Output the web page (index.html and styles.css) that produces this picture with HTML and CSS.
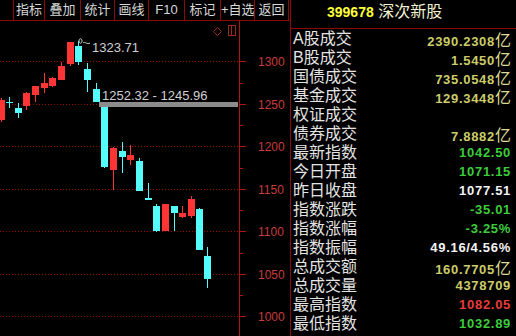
FILE: index.html
```html
<!DOCTYPE html>
<html lang="zh-CN">
<head>
    <meta charset="UTF-8">
    <meta name="viewport" content="width=device-width, initial-scale=1.0">
    <title>399678 深次新股</title>
    <link rel="stylesheet" href="styles.css">
</head>
<body>
    <div class="screen">
        <div class="chart-col">
            <div class="tabs">
                <span class="tab">指标</span>
                <span class="tab">叠加</span>
                <span class="tab">统计</span>
                <span class="tab">画线</span>
                <span class="tab">F10</span>
                <span class="tab">标记</span>
                <span class="tab">+自选</span>
                <span class="tab">返回</span>
            </div>
            <div class="chart">
                <svg id="kline" width="290" height="315" viewBox="0 21 290 315">
                    <!-- grid -->
                    <line class="grid" x1="0" y1="61.5" x2="239" y2="61.5"/>
                    <line class="grid" x1="0" y1="104.5" x2="239" y2="104.5"/>
                    <line class="grid" x1="0" y1="146.5" x2="239" y2="146.5"/>
                    <line class="grid" x1="0" y1="189.5" x2="239" y2="189.5"/>
                    <line class="grid" x1="0" y1="231.5" x2="239" y2="231.5"/>
                    <line class="grid" x1="0" y1="274.5" x2="239" y2="274.5"/>
                    <line class="grid" x1="0" y1="316.5" x2="239" y2="316.5"/>

                    <!-- price axis -->
                    <line class="axis" x1="239.5" y1="21" x2="239.5" y2="336"/>
                    <g class="ticks">
                        <line x1="240" y1="61.5" x2="246" y2="61.5"/>
                        <line x1="240" y1="83.5" x2="243" y2="83.5"/>
                        <line x1="240" y1="104.5" x2="246" y2="104.5"/>
                        <line x1="240" y1="125.5" x2="243" y2="125.5"/>
                        <line x1="240" y1="146.5" x2="246" y2="146.5"/>
                        <line x1="240" y1="168.5" x2="243" y2="168.5"/>
                        <line x1="240" y1="189.5" x2="246" y2="189.5"/>
                        <line x1="240" y1="210.5" x2="243" y2="210.5"/>
                        <line x1="240" y1="231.5" x2="246" y2="231.5"/>
                        <line x1="240" y1="253.5" x2="243" y2="253.5"/>
                        <line x1="240" y1="274.5" x2="246" y2="274.5"/>
                        <line x1="240" y1="295.5" x2="243" y2="295.5"/>
                        <line x1="240" y1="316.5" x2="246" y2="316.5"/>
                    </g>
                    <g class="price">
                        <text x="258" y="66">1300</text>
                        <text x="258" y="109">1250</text>
                        <text x="258" y="151">1200</text>
                        <text x="258" y="194">1150</text>
                        <text x="258" y="236">1100</text>
                        <text x="258" y="279">1050</text>
                        <text x="258" y="321">1000</text>
                    </g>

                    <!-- corner icons -->
                    <path class="icon" d="M217.5 27.5 L221.5 31.5 L217.5 35.5 L213.5 31.5 Z"/>
                    <rect class="icon" x="228.5" y="25.5" width="7" height="10"/>
                    <line class="icon" x1="231.5" y1="25.5" x2="231.5" y2="35.5"/>

                    <!-- gap marker -->
                    <rect class="gap" x="99" y="102" width="139" height="5"/>
                    <text class="note" x="102" y="100">1252.32 - 1245.96</text>

                    <!-- high marker -->
                    <path class="hook" d="M79 41 C79 38 82 38 82 41 C82 44 79 44 79 41 M83 43 C85 41 87 45 90 43"/>
                    <text class="note" x="92" y="52">1323.71</text>

                    <g id="candles"></g>
                </svg>
            </div>
        </div>

        <div class="quote">
            <div class="quote-head">
                <span class="code">399678</span>
                <span class="name">深次新股</span>
            </div>
            <div class="quote-group">
                <div class="row"><span class="label">A股成交</span><span class="value amount">2390.2308<em>亿</em></span></div>
                <div class="row"><span class="label">B股成交</span><span class="value amount">1.5450<em>亿</em></span></div>
                <div class="row"><span class="label">国债成交</span><span class="value amount">735.0548<em>亿</em></span></div>
                <div class="row"><span class="label">基金成交</span><span class="value amount">129.3448<em>亿</em></span></div>
                <div class="row"><span class="label">权证成交</span><span class="value amount"></span></div>
                <div class="row"><span class="label">债券成交</span><span class="value amount">7.8882<em>亿</em></span></div>
            </div>
            <div class="quote-group">
                <div class="row"><span class="label">最新指数</span><span class="value down">1042.50</span></div>
                <div class="row"><span class="label">今日开盘</span><span class="value down">1071.15</span></div>
                <div class="row"><span class="label">昨日收盘</span><span class="value flat">1077.51</span></div>
                <div class="row"><span class="label">指数涨跌</span><span class="value down">-35.01</span></div>
                <div class="row"><span class="label">指数涨幅</span><span class="value down">-3.25%</span></div>
                <div class="row"><span class="label">指数振幅</span><span class="value flat">49.16/4.56%</span></div>
                <div class="row"><span class="label">总成交额</span><span class="value amount">160.7705<em>亿</em></span></div>
                <div class="row"><span class="label">总成交量</span><span class="value amount">4378709</span></div>
                <div class="row"><span class="label">最高指数</span><span class="value up">1082.05</span></div>
                <div class="row"><span class="label">最低指数</span><span class="value down">1032.89</span></div>
            </div>
        </div>
    </div>

    <script>
        // [left, bodyTop, bodyBottom, high, low, rising]
        const candles = [
            [-2, 100, 120, 98, 122, true],
            [6, 102, 103, 97, 108, false],
            [15, 108, 113, 103, 118, false],
            [23, 93, 106, 92, 110, true],
            [32, 86, 95, 86, 102, true],
            [41, 83, 88, 73, 93, true],
            [49, 78, 86, 77, 87, true],
            [58, 66, 80, 62, 80, true],
            [67, 42, 64, 42, 66, true],
            [75, 46, 62, 41, 65, false],
            [84, 69, 80, 63, 92, false],
            [93, 89, 102, 83, 102, false],
            [101, 107, 167, 107, 168, false],
            [110, 148, 170, 147, 190, true],
            [119, 151, 157, 142, 173, false],
            [127, 155, 160, 145, 165, true],
            [136, 161, 191, 158, 191, false],
            [145, 198, 200, 183, 200, false],
            [153, 206, 231, 204, 232, false],
            [162, 204, 231, 204, 231, true],
            [171, 206, 213, 206, 231, false],
            [179, 213, 217, 206, 218, true],
            [188, 199, 216, 196, 218, true],
            [196, 209, 250, 208, 250, false],
            [204, 256, 279, 247, 288, false]
        ];

        const ns = 'http://www.w3.org/2000/svg';
        const group = document.getElementById('candles');

        candles.forEach(([x, top, bottom, high, low, rising]) => {
            const cls = rising ? 'up' : 'down';

            const wick = document.createElementNS(ns, 'rect');
            wick.setAttribute('x', x + 3);
            wick.setAttribute('y', high);
            wick.setAttribute('width', 1);
            wick.setAttribute('height', low - high);
            wick.setAttribute('class', cls);
            group.appendChild(wick);

            const body = document.createElementNS(ns, 'rect');
            body.setAttribute('x', x);
            body.setAttribute('y', top);
            body.setAttribute('width', 7);
            body.setAttribute('height', Math.max(1, bottom - top));
            body.setAttribute('class', cls);
            group.appendChild(body);
        });
    </script>
</body>
</html>
```

FILE: styles.css
```css
* {
    box-sizing: border-box;
}
body {
    margin: 0;
    background: #000;
    font-family: "Liberation Sans", "Noto Sans CJK SC", sans-serif;
    overflow: hidden;
}
.screen {
    display: flex;
    width: 516px;
    height: 336px;
}

/* left: toolbar + k-line chart */
.chart-col {
    width: 290px;
    display: flex;
    flex-direction: column;
}
.tabs {
    display: grid;
    grid-template-columns: 31px 36px 34px 34px 36px 36px 34px 35px;
    height: 21px;
    padding-left: 13px;
    border-bottom: 1px solid #8c0a0a;
}
.tab {
    border-left: 1px solid #8c0a0a;
    color: #d8d8d8;
    font-size: 13px;
    line-height: 20px;
    text-align: center;
    white-space: nowrap;
}
.tab:last-child {
    border-right: 1px solid #8c0a0a;
}
.chart {
    flex: 1;
}
.chart svg {
    display: block;
}
.grid {
    stroke: #8c0a0a;
    stroke-width: 1;
    stroke-dasharray: 1 2;
}
.axis,
.ticks line {
    stroke: #b01414;
    stroke-width: 1;
}
.price text {
    fill: #c83c3c;
    font-size: 12px;
}
.icon {
    fill: none;
    stroke: #9a2a1a;
    stroke-width: 1;
}
.gap {
    fill: #8c8c8c;
}
.note {
    fill: #d0d0d0;
    font-size: 13px;
}
.hook {
    fill: none;
    stroke: #c8c8c8;
    stroke-width: 1;
}
.up {
    fill: #ff3434;
}
.down {
    fill: #54fcfc;
}

/* right: quote panel */
.quote {
    flex: 1;
    border-left: 1px solid #8c0a0a;
    display: flex;
    flex-direction: column;
}
.quote-head {
    height: 29px;
    padding: 2px 0 0 36px;
    line-height: 20px;
    border-bottom: 1px solid #8c0a0a;
    white-space: nowrap;
}
.quote-head .code {
    color: #ffff3c;
    font-weight: bold;
    font-size: 14px;
}
.quote-head .name {
    color: #f0f0d2;
    font-size: 16px;
}
.quote-group {
    padding: 0 5px 0 2px;
}
.quote-group:first-of-type {
    height: 117px;
    border-bottom: 1px solid #8c0a0a;
}
.row {
    display: flex;
    justify-content: space-between;
    align-items: center;
    height: 19px;
}
.label {
    color: #e4e4e4;
    font-size: 16px;
    line-height: 19px;
}
.value {
    font-weight: bold;
    font-size: 13px;
    letter-spacing: 0.7px;
}
.value em {
    font-style: normal;
    font-weight: normal;
    font-size: 16px;
    letter-spacing: 0;
    color: #dcdc96;
}
.amount {
    color: #cccc6a;
}
.down {
    color: #3ccc3c;
}
.flat {
    color: #f4f4f4;
}
.value.up {
    color: #e83c3c;
}
```
